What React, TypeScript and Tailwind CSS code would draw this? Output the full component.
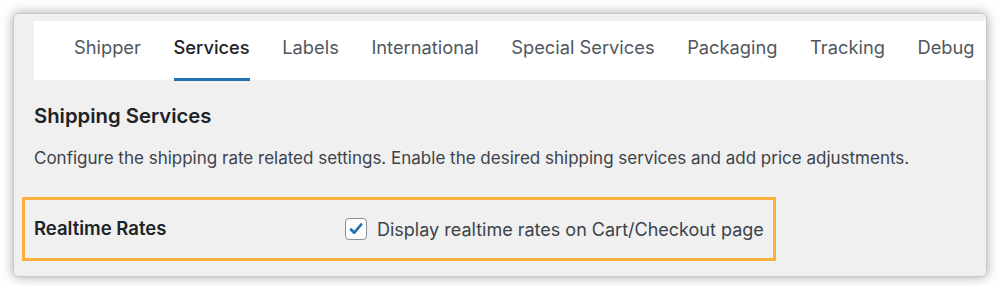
import React from "react";

const tabs = ["Shipper", "Services", "Labels", "International", "Special Services", "Packaging", "Tracking", "Debug"];

export default function App() {
    const [active, setActive] = React.useState("Services");
    const [realtime, setRealtime] = React.useState(true);

    return (
        <div className="w-[1000px] h-[286px] bg-white overflow-hidden pt-[13px] pl-[13px]" style={{ fontFamily: "Inter, 'Noto Sans', sans-serif" }}>
            <div className="w-[974px] h-[264px] rounded-[5px] bg-[#f0f0f1] border border-[#c8c8ca] shadow-[0_0_12px_rgba(0,0,0,0.35)] overflow-hidden">
                <div className="ml-[20px] mt-[7px] h-[59px] bg-white flex items-stretch pl-[40px] gap-[32.6px]">
                    {tabs.map((tab) => (
                        <button
                            key={tab}
                            onClick={() => setActive(tab)}
                            className={
                                "relative flex items-center pb-[6px] text-[18.3px] whitespace-nowrap " +
                                (active === tab ? "text-[#1d2327] font-medium" : "text-[#50575e]")
                            }
                        >
                            {tab}
                            {active === tab && <span className="absolute left-0 right-0 bottom-[-1px] h-[3px] bg-[#2271b1]" />}
                        </button>
                    ))}
                </div>

                <div className="pl-[20px]">
                    <h2 className="mt-[22px] text-[20.3px] font-semibold text-[#1d2327] leading-[28px]">Shipping Services</h2>
                    <p className="mt-[17px] text-[17px] text-[#3c434a] leading-[22px]">
                        Configure the shipping rate related settings. Enable the desired shipping services and add price adjustments.
                    </p>
                </div>

                <div className="ml-[8px] mt-[28px] w-[754px] h-[64px] border-[3px] border-[#fbb03b] flex items-center pl-[9px]">
                    <div className="w-[311px] text-[18.5px] font-semibold text-[#1d2327]">Realtime Rates</div>
                    <label className="flex items-center gap-[10px] text-[18px] text-[#3c434a] cursor-pointer">
                        <span
                            onClick={() => setRealtime(!realtime)}
                            className="w-[22px] h-[22px] rounded-[4px] border border-[#8c8f94] bg-white flex items-center justify-center"
                        >
                            {realtime && (
                                <svg viewBox="0 0 20 20" className="w-[18px] h-[18px]">
                                    <path d="M4.5 10.5l3.6 3.6L15.8 5" fill="none" stroke="#2271b1" strokeWidth="3" strokeLinecap="round" strokeLinejoin="round" />
                                </svg>
                            )}
                        </span>
                        Display realtime rates on Cart/Checkout page
                    </label>
                </div>
            </div>
        </div>
    );
}
